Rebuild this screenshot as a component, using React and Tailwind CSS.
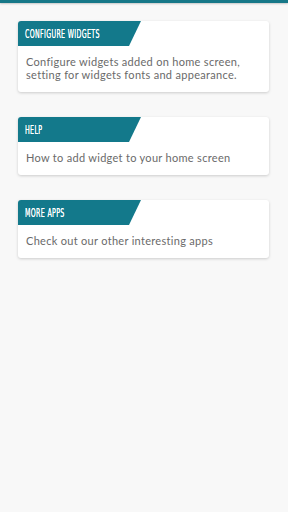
export default function App() {
  const cards = [
    { title: "CONFIGURE WIDGETS", body: ["Configure widgets added on home screen,", "setting for widgets fonts and appearance."] },
    { title: "HELP", body: ["How to add widget to your home screen"] },
    { title: "MORE APPS", body: ["Check out our other interesting apps"] },
  ];
  return (
    <div className="w-[288px] h-[512px] bg-[#f8f8f8] flex flex-col">
      <div className="h-[3px] bg-[#167888] shadow-[0_1px_2px_rgba(0,0,0,0.2)]" />
      <div className="flex flex-col gap-[25px] pt-[18px] pl-[18px] pr-[19px]">
        {cards.map((c) => (
          <div key={c.title} className="bg-white rounded-[3px] shadow-[0_1px_3px_rgba(0,0,0,0.18)] overflow-hidden">
            <div className="relative h-[25px]">
              <svg className="absolute left-0 top-0" width="123" height="25" viewBox="0 0 123 25">
                <polygon points="0,0 123,0 111,25 0,25" fill="#13798b" />
              </svg>
              <div className="relative h-full flex items-center pl-[7px] pt-[1px]">
                <span className="inline-block origin-left scale-x-[0.56] whitespace-nowrap text-white text-[12.5px] font-normal tracking-[0.6px] font-['DejaVu_Sans_Condensed','Liberation_Sans',sans-serif] [text-shadow:0_0_0.3px_white]">
                  {c.title}
                </span>
              </div>
            </div>
            <div className="px-[8px] pt-[9px] pb-[11px] text-[#6a6a6a] text-[11px] leading-[13px] font-['Lato',sans-serif] tracking-[0.3px]">
              {c.body.map((l) => (
                <div key={l}>{l}</div>
              ))}
            </div>
          </div>
        ))}
      </div>
    </div>
  );
}
